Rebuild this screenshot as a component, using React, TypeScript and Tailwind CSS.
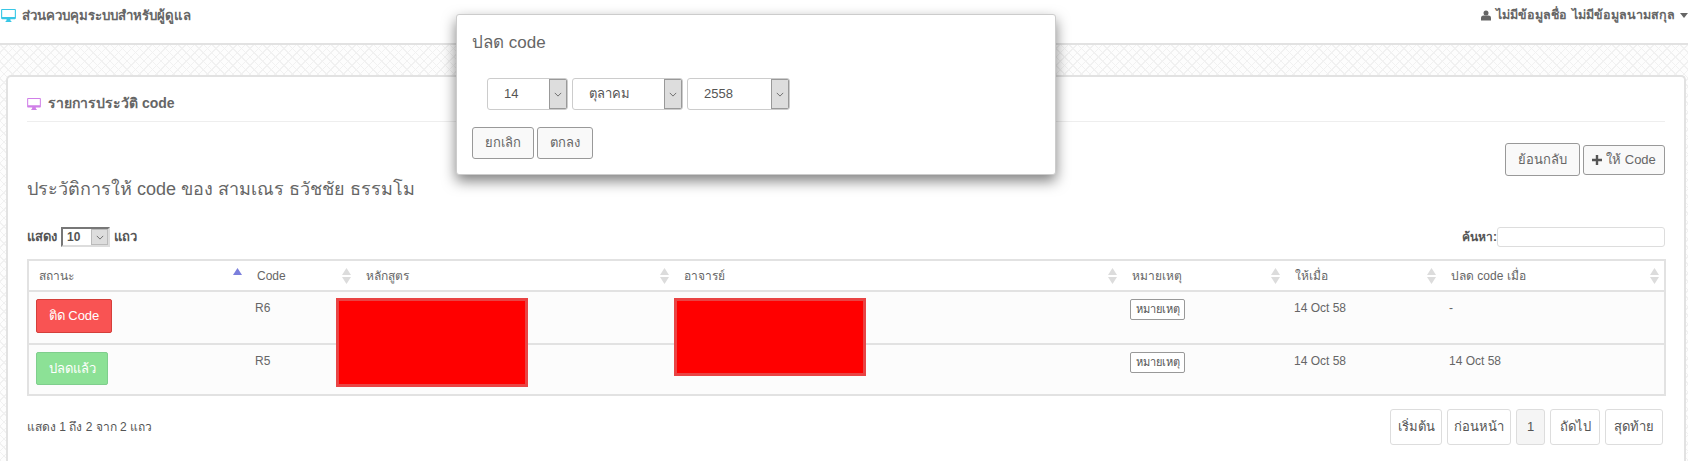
const font = "[font-family:'Liberation_Sans','Noto_Sans',Tahoma,sans-serif]";

function Monitor(props: { className: string }) {
  return (
    <svg viewBox="0 0 16 14" className={props.className} fill="currentColor">
      <path d="M1.2 0h13.6C15.5 0 16 .5 16 1.2v8.6c0 .7-.5 1.2-1.2 1.2H10l.3 1.6 1 .9v.5H4.700v-.5l1-.9.3-1.600H1.200C.5 11 0 10.500 0 9.800V1.200C0 .5.500 0 1.200 0zM1.200 1.200v7.400h13.600V1.200z" />
    </svg>
  );
}

function SortIcon(props: { active?: boolean }) {
  return (
    <svg viewBox="0 0 9 16" className="h-4 w-[9px]">
      <path d="M4.500 0L9 7H0z" fill={props.active ? "#7b7fdc" : "#dcdcdc"} />
      {!props.active && <path d="M4.500 16L0 9h9z" fill="#dcdcdc" />}
    </svg>
  );
}

function Chevron() {
  return (
    <svg viewBox="0 0 10 6" className="h-[5px] w-2" fill="none" stroke="#555">
      <path d="M1 1l4 4 4-4" />
    </svg>
  );
}

function FakeSelect(props: { value: string; className: string; textClass: string }) {
  return (
    <div className={`flex h-8 overflow-hidden rounded-[3px] border border-[#ccc] bg-white text-[13px] text-[#555] ${props.className}`}>
      <div className={`flex flex-1 items-center ${props.textClass}`}>{props.value}</div>
      <div className="flex w-[18px] items-center justify-center border border-[#999] bg-[#ddd]">
        <Chevron />
      </div>
    </div>
  );
}

function Button(props: { children: React.ReactNode; className: string }) {
  return (
    <div className={`flex items-center justify-center rounded-[3px] border border-[#999] bg-[#f9f9f9] text-[13px] text-[#666] ${props.className}`}>
      {props.children}
    </div>
  );
}

function PageButton(props: { label: string; className: string }) {
  return (
    <div className={`flex h-9 items-center justify-center rounded-[3px] border border-[#ddd] text-[13px] text-[#555] ${props.className}`}>
      {props.label}
    </div>
  );
}

const columns = [
  { label: "สถานะ", width: "w-[219px]", active: true },
  { label: "Code", width: "w-[109px]" },
  { label: "หลักสูตร", width: "w-[318px]" },
  { label: "อาจารย์", width: "w-[448px]" },
  { label: "หมายเหตุ", width: "w-[163px]" },
  { label: "ให้เมื่อ", width: "w-[156px]" },
  { label: "ปลด code เมื่อ", width: "w-[224px]" },
];

function NoteButton() {
  return (
    <div className="flex h-[21px] w-[55px] items-center justify-center rounded-[2px] border border-[#999] bg-white text-[11px] text-[#555]">
      หมายเหตุ
    </div>
  );
}

function HistoryTable() {
  return (
    <div className="relative">
      <table className="w-full table-fixed border-collapse border-2 border-[#e2e2e2] text-[12px] text-[#666]">
        <colgroup>
          {columns.map((col) => (
            <col key={col.label} className={col.width} />
          ))}
        </colgroup>
        <thead>
          <tr className="h-[31px] border-b-2 border-[#e2e2e2]">
            {columns.map((col) => (
              <th key={col.label} className="pl-[10px] pr-[5px] text-left font-normal">
                <div className="flex items-center justify-between">
                  <span>{col.label}</span>
                  <SortIcon active={col.active} />
                </div>
              </th>
            ))}
          </tr>
        </thead>
        <tbody className="bg-[#fcfcfc] align-top">
          <tr className="h-[53px] border-b-2 border-[#e2e2e2]">
            <td className="pl-[7px] pr-2 pt-[7px]">
              <div className="flex h-[34px] w-[76px] items-center justify-center rounded-[2px] border border-[#d43f3a] bg-[#f95353] text-[13px] text-white">
                ติด Code
              </div>
            </td>
            <td className="px-2 pt-[7px]">R6</td>
            <td />
            <td />
            <td className="px-2 pt-[7px]"><NoteButton /></td>
            <td className="pl-[9px] pr-2 pt-[7px]">14 Oct 58</td>
            <td className="px-2 pt-[7px]">-</td>
          </tr>
          <tr className="h-[51px]">
            <td className="pl-[7px] pr-2 pt-[7px]">
              <div className="flex h-[33px] w-[72px] items-center justify-center rounded-[2px] border border-[#7fce8d] bg-[#8ce196] text-[13px] text-white">
                ปลดแล้ว
              </div>
            </td>
            <td className="px-2 pt-[7px]">R5</td>
            <td />
            <td />
            <td className="px-2 pt-[7px]"><NoteButton /></td>
            <td className="pl-[9px] pr-2 pt-[7px]">14 Oct 58</td>
            <td className="px-2 pt-[7px]">14 Oct 58</td>
          </tr>
        </tbody>
      </table>
      <div className="absolute left-[309px] top-[39px] h-[89px] w-[192px] border-[3px] border-[#e94444] bg-[#ff0000]" />
      <div className="absolute left-[647px] top-[39px] h-[78px] w-[192px] border-[3px] border-[#e94444] bg-[#ff0000]" />
    </div>
  );
}

export default function App() {
  return (
    <div className={`relative h-[461px] overflow-hidden bg-white ${font}`}>
      <header className="flex h-[45px] items-start justify-between border-b-2 border-[#e2e2e2] bg-white pt-[6px] font-bold text-[#666]">
        <div className="flex items-center gap-[6px] pl-[1px] text-[13.25px]">
          <Monitor className="h-[13px] w-[15px] text-[#38c7e6]" />
          <span>ส่วนควบคุมระบบสำหรับผู้ดูแล</span>
        </div>
        <div className="flex items-center gap-[5px] text-[12.5px]">
          <svg viewBox="0 0 12 12" className="h-[11px] w-[10px]" fill="#666">
            <circle cx="6" cy="3" r="3" />
            <path d="M0 12V9c0-2 1.500-3 3-3h6c1.500 0 3 1 3 3v3z" />
          </svg>
          <span className="[word-spacing:2px]">ไม่มีข้อมูลชื่อ ไม่มีข้อมูลนามสกุล</span>
          <svg viewBox="0 0 8 5" className="h-[5px] w-2" fill="#666">
            <path d="M0 0h8L4 5z" />
          </svg>
        </div>
      </header>

      <main className="h-[416px] bg-[#fdfdfd] bg-[repeating-linear-gradient(45deg,#f1f1f1_0_1px,transparent_1px_6px),repeating-linear-gradient(-45deg,#f1f1f1_0_1px,transparent_1px_6px)] pl-[6px] pr-[2px] pt-[30px]">
        <section className="h-[400px] rounded-t-[5px] border-2 border-b-0 border-[#e2e2e2] bg-white px-[19px]">
          <div className="flex h-[45px] items-center gap-[7px] border-b border-[#eee] pt-[9px] text-[14px] font-bold text-[#666]">
            <Monitor className="h-[12px] w-[14px] text-[#d07fe8]" />
            <span>รายการประวัติ code</span>
          </div>

          <div className="flex h-[105px] items-start justify-between">
            <h3 className="mt-[53px] text-[18px] leading-7 text-[#666]">ประวัติการให้ code ของ สามเณร ธวัชชัย ธรรมโม</h3>
            <div className="mt-[21px] flex items-center gap-[3px]">
              <Button className="h-[33px] w-[75px] border-[#888]">ย้อนกลับ</Button>
              <Button className="h-[30px] w-[82px] gap-1">
                <svg viewBox="0 0 10 10" className="h-[10px] w-[10px]" fill="#555">
                  <path d="M3.800 0h2.400v3.800H10v2.400H6.200V10H3.800V6.200H0V3.800h3.800z" />
                </svg>
                ให้ Code
              </Button>
            </div>
          </div>

          <div className="flex h-[32px] items-start justify-between font-bold text-[#555]">
            <div className="flex items-center gap-1 text-[13px]">
              <span>แสดง</span>
              <div className="flex h-5 w-[49px] border-2 border-[#777] border-r-[#ddd] border-b-[#ddd] bg-white">
                <div className="flex flex-1 items-center pl-1 text-[12px]">10</div>
                <div className="flex w-[17px] items-center justify-center border border-[#bbb] bg-[#ddd]">
                  <Chevron />
                </div>
              </div>
              <span>แถว</span>
            </div>
            <div className="flex items-center text-[12px]">
              <span>ค้นหา:</span>
              <div className="h-5 w-[168px] rounded-[3px] border border-[#ddd] bg-white" />
            </div>
          </div>

          <HistoryTable />

          <div className="mt-[13px] flex items-center justify-between">
            <span className="text-[12px] text-[#555]">แสดง 1 ถึง 2 จาก 2 แถว</span>
            <div className="flex gap-[5px] pr-[2px]">
              <PageButton label="เริ่มต้น" className="w-[52px]" />
              <PageButton label="ก่อนหน้า" className="w-[64px]" />
              <PageButton label="1" className="w-[29px] bg-[#f5f5f5]" />
              <PageButton label="ถัดไป" className="w-[50px]" />
              <PageButton label="สุดท้าย" className="w-[58px]" />
            </div>
          </div>
        </section>
      </main>

      <div className="absolute left-[456px] top-[14px] h-[161px] w-[600px] rounded-[3px] border border-[#ccc] bg-white pl-[15px] pt-4 shadow-[0_6px_14px_rgba(0,0,0,0.5)]">
        <div className="text-[17px] leading-6 text-[#666]">ปลด code</div>
        <div className="mt-[23px] flex gap-1 pl-[15px]">
          <FakeSelect value="14" className="w-[81px]" textClass="pl-4" />
          <FakeSelect value="ตุลาคม" className="w-[111px]" textClass="pl-4" />
          <FakeSelect value="2558" className="w-[103px]" textClass="pl-4" />
        </div>
        <div className="mt-[17px] flex gap-[3px]">
          <Button className="h-[32px] w-[62px]">ยกเลิก</Button>
          <Button className="h-[32px] w-[56px]">ตกลง</Button>
        </div>
      </div>
    </div>
  );
}
